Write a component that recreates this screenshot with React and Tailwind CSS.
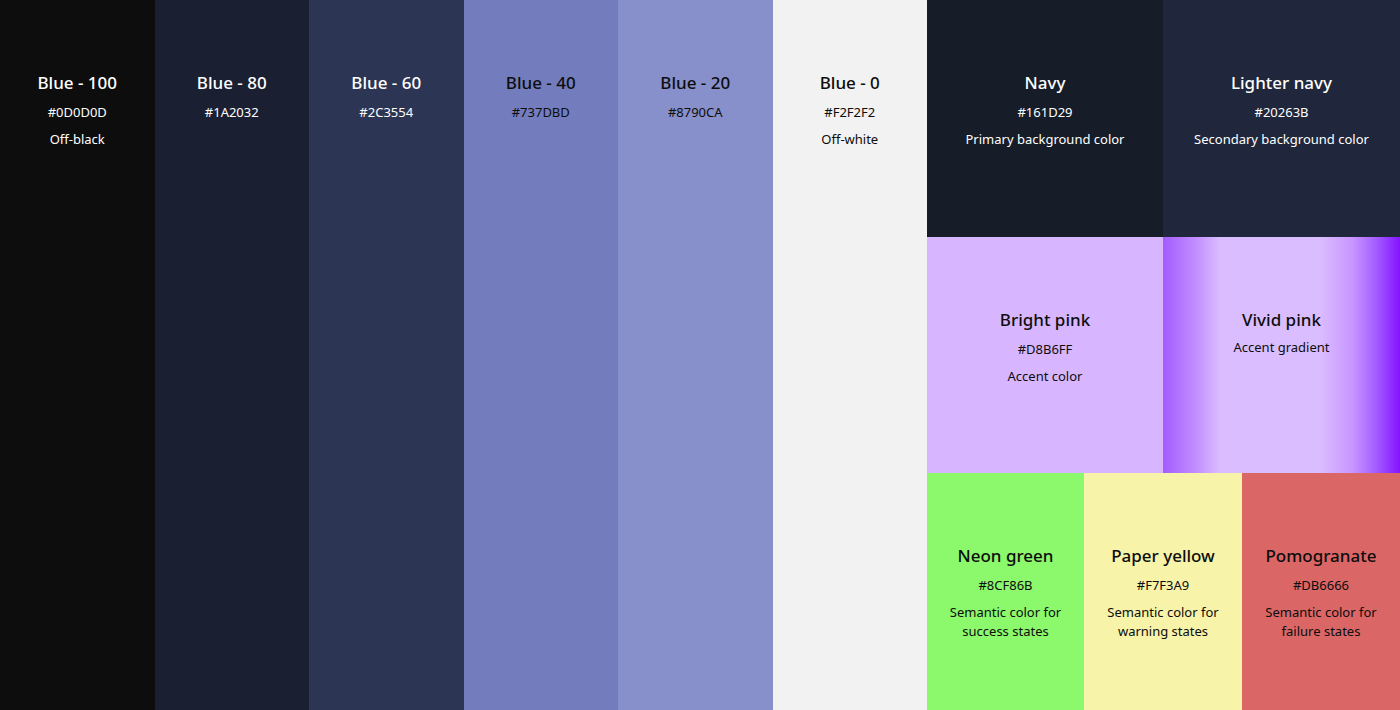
const Cell = ({ title, hex, desc, className, dark }) => (
  <div className={`flex flex-col items-center pt-[72px] text-center ${dark ? 'text-[#0d0d0d]' : 'text-white'} ${className}`}>
    <div className="text-[17px] font-medium leading-[22px]">{title}</div>
    {hex && <div className="mt-[9px] text-[13px] leading-[18px]">{hex}</div>}
    {desc && <div className={`${hex ? 'mt-[9px]' : 'mt-[7px]'} text-[13px] leading-[19px]`}>{desc}</div>}
  </div>
);

export default function App() {
  return (
    <div className="flex h-[710px] w-[1400px] overflow-hidden font-['Inter',sans-serif]">
      <Cell className="w-[154.5px] bg-[#0D0D0D]" title="Blue - 100" hex="#0D0D0D" desc="Off-black" />
      <Cell className="w-[154.5px] bg-[#1A2032]" title="Blue - 80" hex="#1A2032" />
      <Cell className="w-[154.5px] bg-[#2C3554]" title="Blue - 60" hex="#2C3554" />
      <Cell className="w-[154.5px] bg-[#737DBD]" dark title="Blue - 40" hex="#737DBD" />
      <Cell className="w-[154.5px] bg-[#8790CA]" dark title="Blue - 20" hex="#8790CA" />
      <Cell className="w-[154.5px] bg-[#F2F2F2]" dark title="Blue - 0" hex="#F2F2F2" desc="Off-white" />
      <div className="flex w-[473px] flex-col">
        <div className="flex h-[237px]">
          <Cell className="w-[236px] bg-[#161D29]" title="Navy" hex="#161D29" desc="Primary background color" />
          <Cell className="w-[237px] bg-[#20263B]" title="Lighter navy" hex="#20263B" desc="Secondary background color" />
        </div>
        <div className="flex h-[236px]">
          <Cell className="w-[236px] bg-[#D8B6FF]" dark title="Bright pink" hex="#D8B6FF" desc="Accent color" />
          <Cell
            className="w-[237px] bg-[linear-gradient(90deg,#A35CFF_0%,#C28EFF_14%,#DABDFF_24%,#DABDFF_66%,#C995FF_80%,#A35CFF_90%,#8414FF_100%)]"
            dark
            title="Vivid pink"
            desc="Accent gradient"
          />
        </div>
        <div className="flex h-[237px]">
          <Cell className="w-[157px] bg-[#8CF86B]" dark title="Neon green" hex="#8CF86B" desc={<>Semantic color for<br />success states</>} />
          <Cell className="w-[158px] bg-[#F7F3A9]" dark title="Paper yellow" hex="#F7F3A9" desc={<>Semantic color for<br />warning states</>} />
          <Cell className="w-[158px] bg-[#DB6666]" dark title="Pomogranate" hex="#DB6666" desc={<>Semantic color for<br />failure states</>} />
        </div>
      </div>
    </div>
  );
}
